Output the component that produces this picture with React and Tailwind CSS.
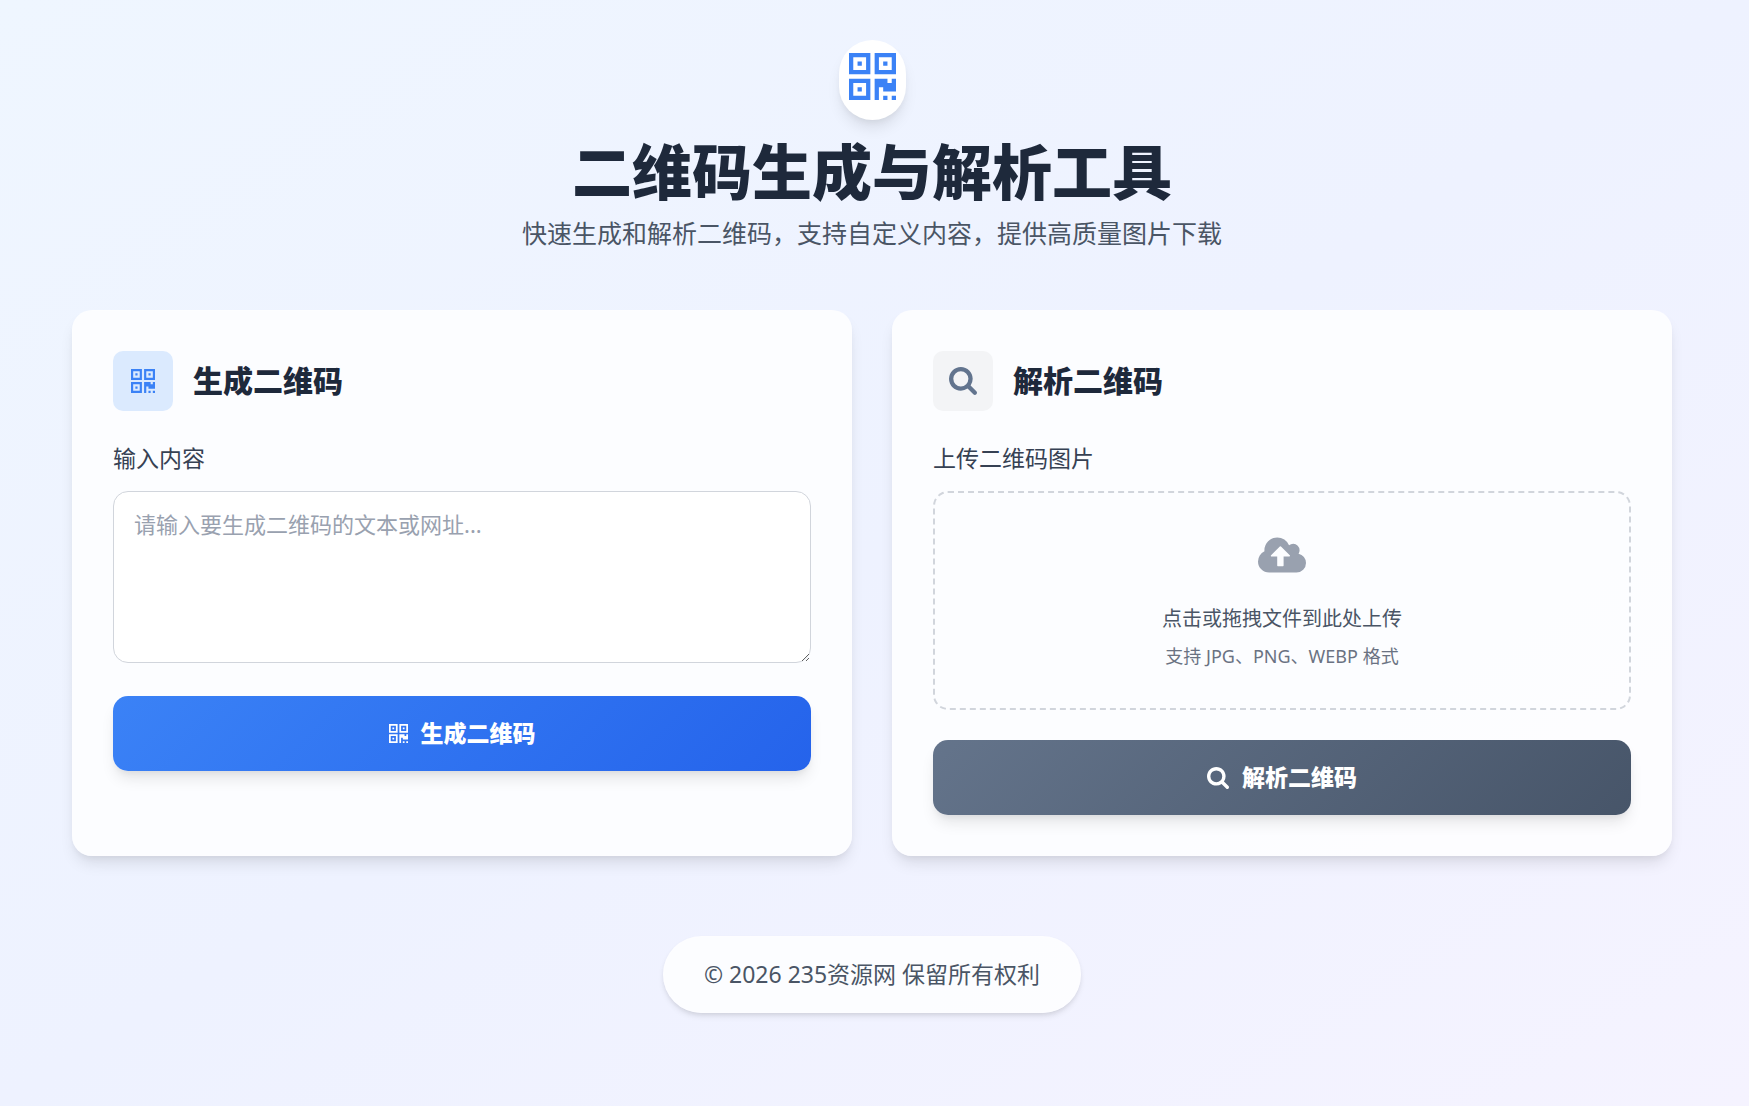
import { useState } from "react";

const QrIcon = ({ className }) => (
  <svg className={className} viewBox="0 128 1408 1408" fill="currentColor" aria-hidden="true">
    <path d="M384 1152v128h-128v-128h128zm0-768v128h-128v-128h128zm768 0v128h-128v-128h128zm-1024 1023h384v-383h-384v383zm0-767h384v-384h-384v384zm768 0h384v-384h-384v384zm-256 256v640h-640v-640h640zm512 512v128h-128v-128h128zm256 0v128h-128v-128h128zm0-512v384h-384v-128h-128v384h-128v-640h384v128h128v-128h128zm-768-768v640h-640v-640h640zm768 0v640h-640v-640h640z" />
  </svg>
);

const SearchIcon = ({ className }) => (
  <svg className={className} viewBox="64 128 1664 1664" fill="currentColor" aria-hidden="true">
    <path d="M1216 832q0-185-131.5-316.5t-316.5-131.5-316.5 131.5-131.5 316.5 131.5 316.5 316.5 131.5 316.5-131.5 131.5-316.5zm512 832q0 52-38 90t-90 38q-54 0-90-38l-343-342q-179 124-399 124-143 0-273.5-55.5t-225-150-150-225-55.5-273.5 55.5-273.5 150-225 225-150 273.5-55.5 273.5 55.5 225 150 150 225 55.5 273.5q0 220-124 399l343 343q37 37 37 90z" />
  </svg>
);

const CloudUploadIcon = ({ className }) => (
  <svg className={className} viewBox="-64 128 1920 1408" fill="currentColor" aria-hidden="true">
    <path d="M1216 864q0-14-9-23l-352-352q-9-9-23-9t-23 9l-351 351q-10 12-10 24 0 14 9 23t23 9h224v352q0 13 9.5 22.5t22.5 9.5h192q13 0 22.5-9.5t9.5-22.5v-352h224q13 0 22.5-9.5t9.5-22.5zm640 288q0 159-112.5 271.5t-271.5 112.5h-1088q-185 0-316.5-131.5t-131.5-316.5q0-130 70-240t188-165q-2-30-2-43 0-212 150-362t362-150q156 0 285.5 87t188.5 231q71-62 166-62 106 0 181 75t75 181q0 76-41 138 130 31 213.5 135.5t83.5 238.5z" />
  </svg>
);

const Card = ({ icon, iconClass, title, children }) => (
  <section className="rounded-[20px] border border-white/20 bg-white/80 p-10 shadow-[0_10px_15px_-3px_rgba(0,0,0,0.1),0_4px_6px_-2px_rgba(0,0,0,0.05)]">
    <div className="mb-[30px] flex items-center gap-5">
      <div className={`flex h-[60px] w-[60px] items-center justify-center rounded-[10px] ${iconClass}`}>
        {icon}
      </div>
      <h2 className="text-[30px] leading-10 font-black text-[#1e293b]">{title}</h2>
    </div>
    {children}
  </section>
);

const ActionButton = ({ icon, className, children }) => (
  <button
    type="button"
    className={`flex h-[75px] w-full items-center justify-center gap-[13px] rounded-[15px] text-[23px] font-black text-white shadow-[0_10px_15px_-3px_rgba(0,0,0,0.1),0_4px_6px_-2px_rgba(0,0,0,0.05)] ${className}`}
  >
    {icon}
    {children}
  </button>
);

export default function App() {
  const [content, setContent] = useState("");

  return (
    <div className="min-h-screen bg-[linear-gradient(to_bottom_right,#eff6ff,#eef2ff_50%,#f5f3ff)] pr-[5px] font-['Noto_Sans','Noto_Sans_CJK_SC',sans-serif]">
      <div className="mx-auto max-w-[1640px] px-5 py-10">
        <header className="mb-[57px] flex flex-col items-center text-center">
          <div className="mb-[22px] flex h-20 items-start rounded-full bg-white px-[10px] pt-[13px] text-[#3b82f6] shadow-[0_10px_15px_-3px_rgba(0,0,0,0.1),0_4px_6px_-2px_rgba(0,0,0,0.05)]">
            <QrIcon className="h-[47px] w-[47px]" />
          </div>
          <h1 className="text-[60px] leading-[60px] font-black text-[#1e293b]">二维码生成与解析工具</h1>
          <p className="mt-[11px] text-[25px] leading-10 text-gray-600">
            快速生成和解析二维码，支持自定义内容，提供高质量图片下载
          </p>
        </header>

        <main className="grid gap-10 lg:grid-cols-2">
          <Card icon={<QrIcon className="h-6 w-6" />} iconClass="bg-blue-100 text-[#3b82f6]" title="生成二维码">
            <label htmlFor="content" className="mb-[15px] block text-[23px] leading-[35px] text-gray-700">
              输入内容
            </label>
            <textarea
              id="content"
              value={content}
              onChange={(e) => setContent(e.target.value)}
              placeholder="请输入要生成二维码的文本或网址..."
              className="mb-[33px] block h-[172px] w-full resize rounded-[15px] border border-gray-300 bg-white px-5 py-4 text-[22px] leading-8 text-gray-800 placeholder:text-gray-400"
            />
            <ActionButton
              icon={<QrIcon className="h-[19px] w-[19px]" />}
              className="bg-linear-135 from-[#3b82f6] to-[#2563eb]"
            >
              生成二维码
            </ActionButton>
          </Card>

          <Card icon={<SearchIcon className="h-7 w-7" />} iconClass="bg-gray-100 text-slate-500" title="解析二维码">
            <label htmlFor="file" className="mb-[15px] block text-[23px] leading-[35px] text-gray-700">
              上传二维码图片
            </label>
            <label
              htmlFor="file"
              className="mb-[30px] flex h-[219px] cursor-pointer flex-col items-center rounded-[15px] border-2 border-dashed border-gray-300 pt-11"
            >
              <CloudUploadIcon className="h-9 w-12 text-gray-400" />
              <span className="mt-[31px] text-[20px] leading-[30px] text-gray-600">点击或拖拽文件到此处上传</span>
              <span className="mt-[7px] text-[18px] leading-[30px] text-gray-500">支持 JPG、PNG、WEBP 格式</span>
              <input id="file" type="file" accept="image/*" className="sr-only" />
            </label>
            <ActionButton
              icon={<SearchIcon className="h-[22px] w-[22px]" />}
              className="bg-linear-135 from-[#64748b] to-[#475569]"
            >
              解析二维码
            </ActionButton>
          </Card>
        </main>

        <footer className="mt-20 flex justify-center">
          <p className="rounded-full border border-white/20 bg-white/80 px-10 py-5 text-[23px] leading-[35px] text-gray-600 shadow-[0_4px_6px_-1px_rgba(0,0,0,0.1),0_2px_4px_-1px_rgba(0,0,0,0.06)]">
            © 2026 235资源网 保留所有权利
          </p>
        </footer>
      </div>
    </div>
  );
}
